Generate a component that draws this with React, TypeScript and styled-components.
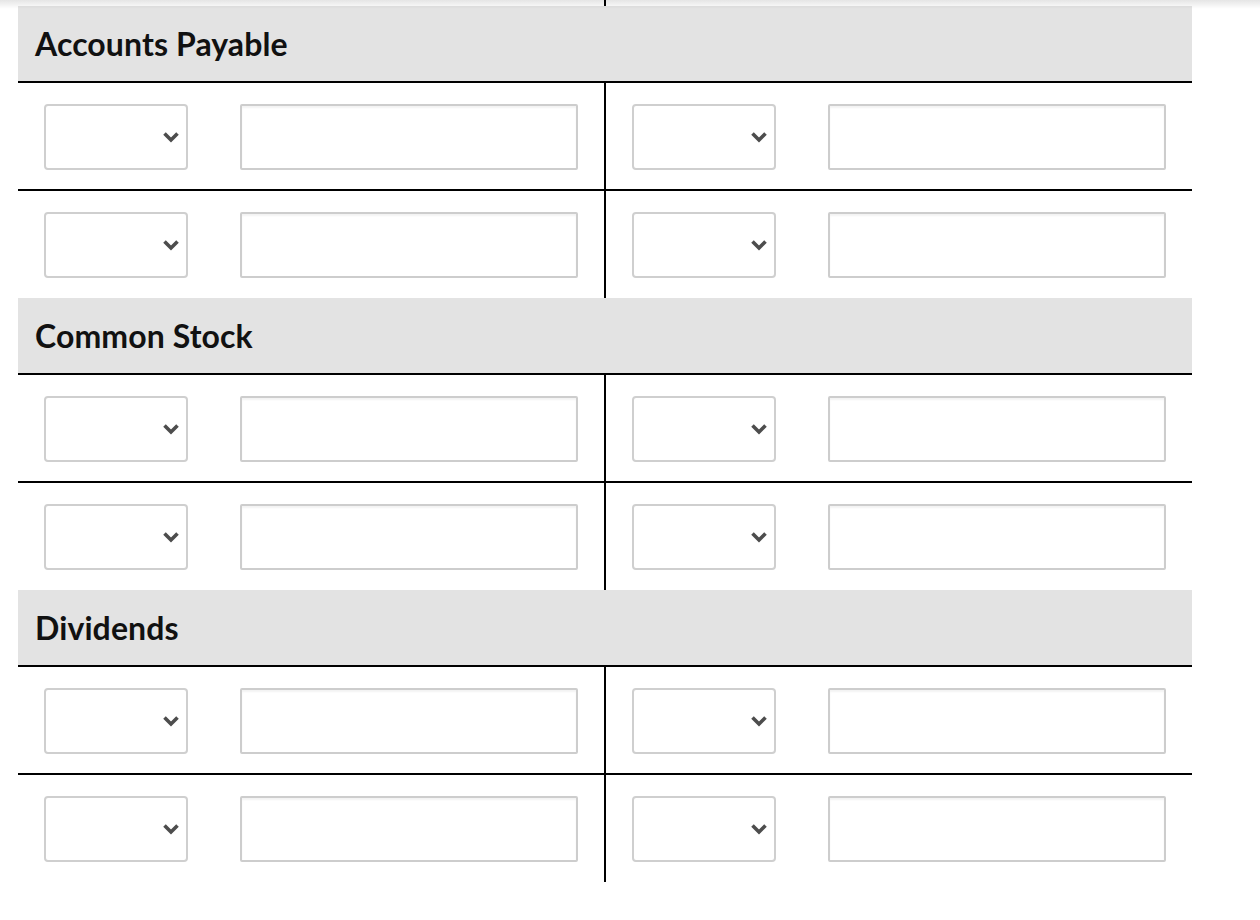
import styled, { createGlobalStyle } from 'styled-components'

const GlobalStyle = createGlobalStyle`
	body {
		margin: 0;
		background: #fff;
		font-family: Lato, 'Open Sans', sans-serif;
		color: #111;
	}
`

const accounts = ['Accounts Payable', 'Common Stock', 'Dividends']

export default function App () {
	return (
		<Page>
			<GlobalStyle />
			<TopShadow />
			<TopEdge>
				<EdgeCell />
				<div />
			</TopEdge>
			{accounts.map(name => (
				<Account key={name}>
					<Header>{name}</Header>
					<Row>
						<EntryCell />
						<EntryCell right />
					</Row>
					<Row last>
						<EntryCell />
						<EntryCell right />
					</Row>
				</Account>
			))}
		</Page>
	)
}

function EntryCell ({ right }: { right?: boolean }) {
	return (
		<Cell right={right}>
			<SelectWrap>
				<Select defaultValue=''>
					<option value='' />
					<option value='1'>Debit</option>
					<option value='2'>Credit</option>
				</Select>
				<Chevron width='18' height='12' viewBox='0 0 18 12'>
					<path d='M2.5 2.5 L9 9 L15.5 2.5' fill='none' stroke='#4d4d4d' strokeWidth='3.6' />
				</Chevron>
			</SelectWrap>
			<Amount type='text' />
		</Cell>
	)
}

const Page = styled.main`
	position: relative;
	width: 1260px;
	padding-bottom: 39px;
`

const TopShadow = styled.div`
	position: absolute;
	top: 0;
	left: 0;
	right: 0;
	height: 9px;
	background: linear-gradient(rgba(0, 0, 0, 0.1), rgba(0, 0, 0, 0));
	pointer-events: none;
	z-index: 2;
`

const TopEdge = styled.div`
	display: grid;
	grid-template-columns: 588px 586px;
	margin-left: 18px;
	height: 6px;
`

const EdgeCell = styled.div`
	border-right: 2px solid #000;
`

const Account = styled.section`
	margin-left: 18px;
	width: 1174px;
`

const Header = styled.h2`
	margin: 0;
	height: 75px;
	display: flex;
	align-items: center;
	padding-left: 17px;
	background: #e3e3e3;
	border-bottom: 2px solid #000;
	font-size: 32px;
	font-weight: 700;
	color: #111;
	letter-spacing: 0.1px;
`

const Row = styled.div<{ last?: boolean }>`
	display: grid;
	grid-template-columns: 588px 586px;
	height: ${p => (p.last ? '107px' : '106px')};
	border-bottom: ${p => (p.last ? 'none' : '2px solid #000')};
`

const Cell = styled.div<{ right?: boolean }>`
	display: flex;
	align-items: flex-start;
	gap: 52px;
	padding: 21px 0 0 26px;
	border-right: ${p => (p.right ? 'none' : '2px solid #000')};
`

const SelectWrap = styled.div`
	position: relative;
	width: 144px;
	height: 66px;
`

const Select = styled.select`
	appearance: none;
	width: 100%;
	height: 100%;
	box-sizing: border-box;
	border: 2px solid #cfcfcf;
	border-radius: 4px;
	background: #fff;
	font-family: Lato, sans-serif;
	font-size: 16px;
	color: #333;
	padding: 0 30px 0 10px;
`

const Chevron = styled.svg`
	position: absolute;
	right: 8px;
	top: 27px;
	pointer-events: none;
`

const Amount = styled.input`
	width: 338px;
	height: 66px;
	box-sizing: border-box;
	border: 2px solid #cdcdcd;
	border-radius: 2px;
	box-shadow: inset 0 2px 2px rgba(0, 0, 0, 0.05);
	font-family: Lato, sans-serif;
	font-size: 16px;
	padding: 0 10px;
	outline: none;
`
